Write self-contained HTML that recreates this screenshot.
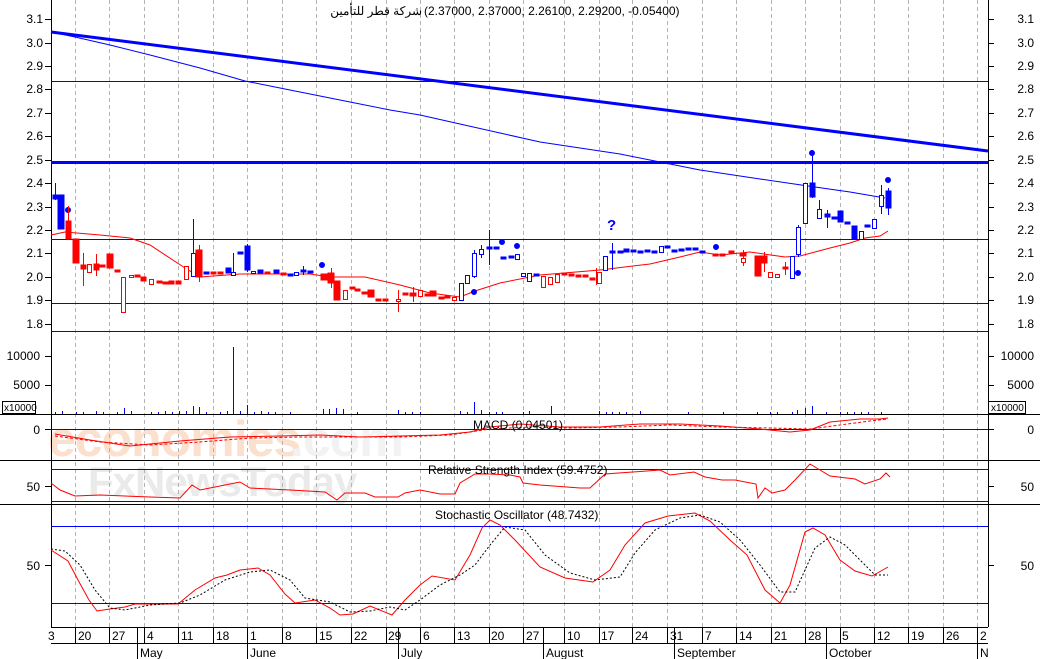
<!DOCTYPE html>
<html><head><meta charset="utf-8"><style>
html,body{margin:0;padding:0;background:#fff;}
svg{display:block;font-family:"Liberation Sans","Noto Sans CJK SC",sans-serif;}
</style></head><body>
<svg width="1040" height="659" viewBox="0 0 1040 659" xmlns="http://www.w3.org/2000/svg">
<rect width="1040" height="659" fill="#fff"/>
<!-- watermark -->
<g opacity="0.75">
<text x="48" y="456" font-size="50" font-weight="bold" fill="#fad6bd" letter-spacing="-1">economies</text>
<text x="290" y="456" font-size="50" font-weight="bold" fill="#eeeeee" letter-spacing="-1">.com</text>
<text x="88" y="496" font-size="42" font-weight="bold" fill="#e4e4e4" letter-spacing="-1">FxNewsToday</text>
</g>
<!-- vertical dashed gridlines -->
<g stroke="#b4b4b4" stroke-dasharray="4,3" stroke-width="1">
<path d="M75.5 0V627M109.5 0V627M144.5 0V627M178.5 0V627M213.5 0V627M247.5 0V627M282.5 0V627M316.5 0V627M351.5 0V627M386.5 0V627M420.5 0V627M454.5 0V627M489.5 0V627M523.5 0V627M564.5 0V627M599.5 0V627M632.5 0V627M667.5 0V627M702.5 0V627M736.5 0V627M771.5 0V627M805.5 0V627M840.5 0V627M874.5 0V627M908.5 0V627M943.5 0V627M977.5 0V627"/>
</g>
<!-- panel borders -->
<g stroke="#000" stroke-width="1">
<path d="M51.5 0V627M988.5 0V627"/>
<path d="M0 414.5H1040M0 460.5H1040M0 504.5H1040M51 627.5H988M51 643.5H988"/>
</g>
<!-- horizontal price lines -->
<g stroke="#0000ff" fill="none">
<path d="M51 81.5H988M51 239.5H988M51 303.5H988M51 331.5H988" stroke-width="1"/>
<path d="M51 162.5H988" stroke-width="3"/>
<path d="M51 32L988 151" stroke-width="3"/>
<path d="M51 32L75 37L110 45L150 55L200 68L245 81L275 87L310 94L350 102L390 110L420 115L460 124L500 133L540 142L580 148L620 154L660 162L700 170L760 179L808 186L850 192L885 198" stroke-width="1"/>
<path d="M51 429.5H988M51 469.5H988M51 501.5H988M51 526.5H988M51 603.5H988" stroke-width="1"/>
</g>
<!-- red MA -->
<path d="M51 235L65 232L100 235L130 238L150 245L185 268L200 277L240 274L310 274L330 277L365 277L400 285L430 293L460 297L475 291L500 283L540 275L600 270L650 264L680 257L700 252L720 255L750 252L785 257L800 256L830 248L850 243L865 238L880 236L888 231" stroke="#ff0000" fill="none"/>
<!-- candles -->
<g stroke-width="1">
<g stroke="#0000ff" fill="#0000ff">
<path d="M55.5 183V200M61.5 195V229M193.5 219V277M233.5 253V275M489.5 230V265M812.5 150V198M819.5 200V218M827.5 210V228M881.5 185V214M888.5 188V215M805.5 183V223M798.5 225V257M612.5 243V270M474.5 250V278M481.5 245V258M303.5 266V275M247.5 244V272"/>
<rect x="53" y="195" width="5" height="4"/><rect x="58" y="195" width="6" height="34"/>
<rect x="226" y="268" width="5" height="5"/><rect x="245" y="246" width="5" height="24"/>
<rect x="258" y="270" width="5" height="3"/><rect x="274" y="270" width="5" height="3"/>
<rect x="204" y="272" width="5" height="2"/><rect x="238" y="252" width="5" height="2"/><rect x="288" y="274" width="5" height="2"/><rect x="301" y="270" width="5" height="2"/><rect x="308" y="271" width="5" height="2"/>
<rect x="487" y="247" width="5" height="2"/><rect x="494" y="247" width="5" height="2"/><rect x="501" y="257" width="5" height="2"/><rect x="509" y="256" width="5" height="2"/>
<rect x="534" y="274" width="5" height="2"/>
<rect x="610" y="251" width="5" height="2"/><rect x="618" y="251" width="5" height="2"/><rect x="624" y="249" width="5" height="3"/><rect x="631" y="250" width="5" height="2"/><rect x="638" y="251" width="5" height="2"/><rect x="645" y="250" width="5" height="2"/><rect x="652" y="251" width="5" height="2"/><rect x="665" y="246" width="5" height="2"/><rect x="672" y="250" width="5" height="2"/><rect x="679" y="249" width="5" height="2"/><rect x="686" y="248" width="5" height="2"/><rect x="693" y="248" width="5" height="2"/><rect x="700" y="251" width="5" height="2"/>
<rect x="810" y="183" width="5" height="14"/><rect x="825" y="214" width="5" height="3"/><rect x="832" y="217" width="5" height="2"/><rect x="838" y="211" width="5" height="11"/><rect x="845" y="222" width="5" height="2"/><rect x="852" y="226" width="5" height="13"/><rect x="865" y="225" width="5" height="2"/><rect x="886" y="191" width="5" height="17"/>
<circle cx="68" cy="210" r="2.5"/><circle cx="322" cy="265" r="2.5"/><circle cx="474" cy="292" r="2.5"/><circle cx="502" cy="242" r="2.5"/><circle cx="517" cy="246" r="2.5"/><circle cx="716" cy="247" r="2.5"/><circle cx="798" cy="273" r="2.5"/><circle cx="812" cy="153" r="2.5"/><circle cx="888" cy="180" r="2.5"/>
</g>
<g stroke="#0000ff" fill="#fff">
<rect x="191.5" y="253.5" width="4" height="23"/><rect x="231.5" y="272.5" width="4" height="3"/><rect x="251.5" y="271.5" width="4" height="2"/><rect x="294.5" y="272.5" width="4" height="3"/>
<rect x="459.5" y="283.5" width="4" height="17"/><rect x="465.5" y="275.5" width="4" height="8"/><rect x="472.5" y="253.5" width="4" height="23"/><rect x="479.5" y="249.5" width="4" height="5"/><rect x="515.5" y="254.5" width="4" height="5"/>
<rect x="521.5" y="273.5" width="4" height="3"/><rect x="527.5" y="273.5" width="4" height="8"/>
<rect x="603.5" y="256.5" width="4" height="14"/><rect x="659.5" y="246.5" width="4" height="6"/>
<rect x="790.5" y="256.5" width="4" height="22"/><rect x="796.5" y="227.5" width="4" height="27"/><rect x="803.5" y="183.5" width="4" height="40"/><rect x="817.5" y="209.5" width="4" height="9"/><rect x="859.5" y="231.5" width="4" height="8"/><rect x="872.5" y="219.5" width="4" height="9"/><rect x="879.5" y="195.5" width="4" height="11"/>
</g>
<g stroke="#ff0000" fill="#ff0000">
<path d="M68.5 206V240M83.5 253V286M96.5 254V276M199.5 245V282M331.5 268V288M398.5 290V312M413.5 287V302M596.5 268V285M743.5 250V266M764.5 252V272M785.5 262V275"/>
<rect x="66" y="221" width="5" height="18"/><rect x="73" y="239" width="6" height="24"/><rect x="81" y="265" width="5" height="4"/><rect x="94" y="264" width="5" height="6"/><rect x="100" y="265" width="5" height="2"/><rect x="107" y="254" width="6" height="14"/><rect x="115" y="270" width="5" height="2"/>
<rect x="135" y="275" width="5" height="2"/><rect x="141" y="277" width="5" height="4"/><rect x="157" y="281" width="5" height="2"/><rect x="163" y="282" width="5" height="2"/><rect x="169" y="281" width="5" height="3"/><rect x="176" y="281" width="5" height="3"/>
<rect x="196" y="250" width="6" height="27"/><rect x="211" y="272" width="5" height="2"/><rect x="218" y="272" width="5" height="2"/><rect x="265" y="272" width="5" height="2"/><rect x="281" y="273" width="5" height="2"/>
<rect x="321" y="274" width="6" height="6"/><rect x="328" y="273" width="6" height="10"/><rect x="334" y="281" width="6" height="19"/><rect x="350" y="287" width="5" height="2"/><rect x="355" y="289" width="5" height="2"/><rect x="362" y="292" width="5" height="2"/><rect x="368" y="290" width="6" height="7"/><rect x="376" y="299" width="5" height="2"/><rect x="383" y="299" width="5" height="2"/><rect x="403" y="293" width="5" height="2"/><rect x="410" y="293" width="6" height="3"/><rect x="425" y="294" width="5" height="2"/><rect x="430" y="291" width="6" height="5"/><rect x="439" y="297" width="5" height="2"/><rect x="445" y="296" width="5" height="2"/>
<rect x="562" y="273" width="5" height="2"/><rect x="569" y="274" width="5" height="2"/><rect x="576" y="275" width="5" height="2"/><rect x="583" y="275" width="5" height="2"/><rect x="590" y="278" width="5" height="2"/>
<rect x="713" y="254" width="5" height="2"/><rect x="720" y="254" width="5" height="2"/><rect x="729" y="251" width="5" height="2"/><rect x="740" y="253" width="6" height="3"/><rect x="755" y="256" width="6" height="20"/><rect x="761" y="256" width="6" height="7"/><rect x="783" y="267" width="5" height="2"/>
</g>
<g stroke="#ff0000" fill="#fff">
<rect x="87.5" y="264.5" width="4" height="8"/><rect x="121.5" y="277.5" width="4" height="35"/><rect x="129.5" y="275.5" width="4" height="2"/><rect x="149.5" y="279.5" width="4" height="5"/><rect x="184.5" y="266.5" width="4" height="13"/>
<rect x="343.5" y="290.5" width="4" height="9"/><rect x="396.5" y="299.5" width="4" height="2"/><rect x="418.5" y="290.5" width="4" height="6"/><rect x="452.5" y="297.5" width="4" height="3"/>
<rect x="541.5" y="276.5" width="4" height="11"/><rect x="548.5" y="277.5" width="4" height="7"/><rect x="555.5" y="274.5" width="4" height="8"/><rect x="597.5" y="272.5" width="4" height="11"/>
<rect x="741.5" y="258.5" width="4" height="4"/><rect x="768.5" y="272.5" width="4" height="5"/><rect x="775.5" y="274.5" width="4" height="3"/>
</g>
</g>
<text x="607" y="230" font-size="15" font-weight="bold" fill="#0000ff">?</text>
<!-- volume -->
<g stroke="#0000ff">
<path d="M55.5 414V412M62.5 414V411M76.5 414V412M83.5 414V412M96.5 414V411M103.5 414V412M117.5 414V412M124.5 414V408M131.5 414V411M151.5 414V412M158.5 414V412M165.5 414V411M172.5 414V412M179.5 414V411M186.5 414V411M193.5 414V406M199.5 414V407M206.5 414V412M220.5 414V412M227.5 414V411M233.5 414V347M240.5 414V411M247.5 414V405M254.5 414V412M261.5 414V411M268.5 414V412M275.5 414V412M290.5 414V412M323.5 414V409M329.5 414V409M336.5 414V408M343.5 414V409M357.5 414V412M398.5 414V410M405.5 414V412M412.5 414V412M420.5 414V412M460.5 414V411M467.5 414V412M474.5 414V402M481.5 414V410M489.5 414V412M496.5 414V412M502.5 414V412M523.5 414V412M529.5 414V411M551.5 414V406M599.5 414V411M606.5 414V412M612.5 414V412M619.5 414V412M626.5 414V412M640.5 414V411M688.5 414V412M723.5 414V412M757.5 414V412M770.5 414V412M777.5 414V412M792.5 414V412M797.5 414V410M805.5 414V408M812.5 414V406M826.5 414V412M840.5 414V412M847.5 414V412M854.5 414V412M861.5 414V412M868.5 414V412M881.5 414V412"/>
</g>
<!-- MACD -->
<path d="M55 434L90 440L130 446L180 441L230 437L280 436L320 435L360 437L400 436L440 435L470 432L490 427L520 424L560 427L600 427L640 424L680 424L720 426L760 429L790 432L810 430L830 422L860 419L880 419L888 418" stroke="#ff0000" fill="none"/>
<path d="M55 436L100 442L150 445L200 442L250 438L300 437L350 437L400 437L450 435L490 429L530 427L570 428L620 427L670 425L720 427L770 428L810 429L840 425L870 421L888 419" stroke="#ff0000" fill="none" stroke-dasharray="3,2"/>
<!-- RSI -->
<path d="M51 483L60 490L75 496L100 495L150 497L180 498L192 485L200 490L240 482L250 488L290 490L325 492L337 500L345 493L365 493L375 497L398 497L405 493L420 490L440 494L455 494L460 483L475 474L490 474L510 475L520 477L523 483L540 485L580 488L590 488L605 474L660 470L670 475L694 472L705 477L722 480L735 480L756 484L758 498L765 488L772 493L785 490L795 480L810 464L820 470L830 476L855 479L865 484L880 479L886 473L890 477" stroke="#ff0000" fill="none"/>
<!-- Stochastic -->
<path d="M51 550L68 561L78 580L89 600L97 611L110 609L125 607L135 604L150 604L178 604L195 590L215 578L227 575L240 570L258 568L270 575L285 594L295 603L315 600L330 608L340 615L353 614L370 606L392 615L405 600L420 585L432 576L455 580L470 555L482 528L490 520L500 525L515 540L540 567L565 578L593 582L610 570L625 545L645 523L668 516L695 513L710 521L730 540L747 555L765 590L780 603L790 585L805 532L813 528L825 535L840 560L855 571L872 576L888 567" stroke="#ff0000" fill="none"/>
<path d="M51 549L65 551L80 565L95 590L110 608L125 610L150 605L180 603L200 595L225 580L250 572L270 570L290 580L305 598L330 602L350 612L370 611L390 607L405 610L420 600L440 585L460 575L475 565L490 545L505 527L525 530L545 555L570 573L595 580L620 577L635 553L655 530L680 518L700 515L720 522L740 540L760 565L780 592L795 592L805 570L815 548L830 537L845 545L860 560L875 575L888 575" stroke="#000" fill="none" stroke-dasharray="2,2"/>
<!-- axis ticks -->
<g stroke="#000">
<path d="M45 19.5H51M45 43.5H51M45 66.5H51M45 89.5H51M45 113.5H51M45 136.5H51M45 160.5H51M45 183.5H51M45 207.5H51M45 230.5H51M45 253.5H51M45 277.5H51M45 300.5H51M45 324.5H51M45 356.5H51M45 385.5H51M45 429.5H51M45 486.5H51M45 565.5H51"/>
<path d="M988 19.5H994M988 43.5H994M988 66.5H994M988 89.5H994M988 113.5H994M988 136.5H994M988 160.5H994M988 183.5H994M988 207.5H994M988 230.5H994M988 253.5H994M988 277.5H994M988 300.5H994M988 324.5H994M988 356.5H994M988 385.5H994M988 429.5H994M988 486.5H994M988 565.5H994"/>
<path d="M75.5 627V643M109.5 627V643M137.5 627V659M144.5 627V643M178.5 627V643M213.5 627V643M247.5 627V659M282.5 627V643M316.5 627V643M351.5 627V643M386.5 627V643M398.5 627V659M420.5 627V643M454.5 627V643M489.5 627V643M523.5 627V643M543.5 627V659M564.5 627V643M599.5 627V643M632.5 627V643M667.5 627V643M674.5 627V659M702.5 627V643M736.5 627V643M771.5 627V643M805.5 627V643M826.5 627V659M840.5 627V643M874.5 627V643M908.5 627V643M943.5 627V643M977.5 627V659"/>
</g>
<g font-size="12" fill="#000">
<g text-anchor="end">
<text x="43" y="23">3.1</text><text x="43" y="47">3.0</text><text x="43" y="70">2.9</text><text x="43" y="93">2.8</text><text x="43" y="117">2.7</text><text x="43" y="140">2.6</text><text x="43" y="164">2.5</text><text x="43" y="187">2.4</text><text x="43" y="211">2.3</text><text x="43" y="234">2.2</text><text x="43" y="257">2.1</text><text x="43" y="281">2.0</text><text x="43" y="304">1.9</text><text x="43" y="328">1.8</text>
<text x="40" y="360">10000</text><text x="40" y="389">5000</text><text x="40" y="434">0</text><text x="40" y="491">50</text><text x="40" y="570">50</text>
</g>
<g text-anchor="end">
<text x="1034" y="23">3.1</text><text x="1034" y="47">3.0</text><text x="1034" y="70">2.9</text><text x="1034" y="93">2.8</text><text x="1034" y="117">2.7</text><text x="1034" y="140">2.6</text><text x="1034" y="164">2.5</text><text x="1034" y="187">2.4</text><text x="1034" y="211">2.3</text><text x="1034" y="234">2.2</text><text x="1034" y="257">2.1</text><text x="1034" y="281">2.0</text><text x="1034" y="304">1.9</text><text x="1034" y="328">1.8</text>
<text x="1034" y="360">10000</text><text x="1034" y="389">5000</text><text x="1034" y="434">0</text><text x="1034" y="491">50</text><text x="1034" y="570">50</text>
</g>
<rect x="2.5" y="401.5" width="33" height="12" fill="#fff" stroke="#000"/>
<text x="4" y="411" font-size="10">x10000</text>
<rect x="988.5" y="401.5" width="37" height="12" fill="#fff" stroke="#000"/>
<text x="991" y="411" font-size="10">x10000</text>
<text x="422" y="15" text-anchor="end">شركة قطر للتأمين</text>
<text x="424" y="15">(2.37000, 2.37000, 2.26100, 2.29200, -0.05400)</text>
<text x="473" y="429">MACD (0.04501)</text>
<text x="428" y="474">Relative Strength Index (59.4752)</text>
<text x="435" y="519">Stochastic Oscillator (48.7432)</text>
<text x="48" y="640">3</text><text x="78" y="640">20</text><text x="112" y="640">27</text><text x="147" y="640">4</text><text x="181" y="640">11</text><text x="216" y="640">18</text><text x="250" y="640">1</text><text x="285" y="640">8</text><text x="319" y="640">15</text><text x="354" y="640">22</text><text x="388" y="640">29</text><text x="423" y="640">6</text><text x="457" y="640">13</text><text x="491" y="640">20</text><text x="526" y="640">27</text><text x="567" y="640">10</text><text x="601" y="640">17</text><text x="635" y="640">24</text><text x="670" y="640">31</text><text x="705" y="640">7</text><text x="739" y="640">14</text><text x="774" y="640">21</text><text x="808" y="640">28</text><text x="842" y="640">5</text><text x="877" y="640">12</text><text x="911" y="640">19</text><text x="946" y="640">26</text><text x="980" y="640">2</text>
<text x="140" y="657">May</text><text x="250" y="657">June</text><text x="401" y="657">July</text><text x="546" y="657">August</text><text x="677" y="657">September</text><text x="829" y="657">October</text><text x="980" y="657">N</text>
</g>
</svg>
</body></html>
